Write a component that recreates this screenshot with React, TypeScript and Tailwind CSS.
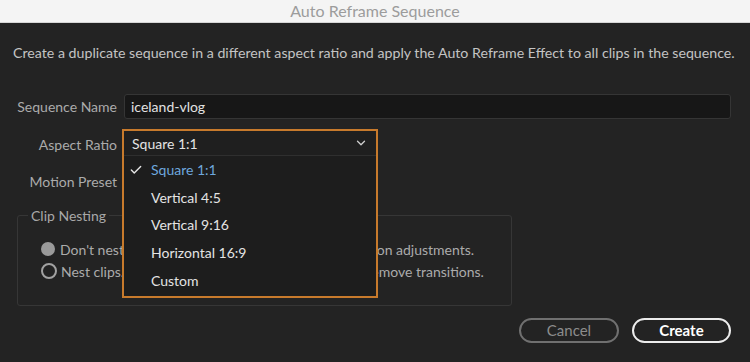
import { Check, ChevronDown } from "lucide-react";

const font = { fontFamily: "Lato, 'Open Sans', sans-serif" };

const options = ["Square 1:1", "Vertical 4:5", "Vertical 9:16", "Horizontal 16:9", "Custom"];

export default function App() {
  return (
    <div className="w-[750px] h-[362px] flex flex-col bg-[#232323] overflow-hidden" style={font}>
      {/* title bar */}
      <div className="h-[23px] shrink-0 bg-[#f4f4f4] border-b border-[#d6d6d6] flex items-center justify-center">
        <span className="text-[16px] text-[#9c9c9c] leading-none">Auto Reframe Sequence</span>
      </div>

      <div className="flex-1 flex flex-col px-[17px] pt-[20px] text-[14px] text-[#ababab]">
        <p className="text-[14.2px] leading-[20px] text-[#c4c4c4] whitespace-nowrap -ml-[4px]">
          Create a duplicate sequence in a different aspect ratio and apply the Auto Reframe Effect to all clips in the sequence.
        </p>

        {/* form rows */}
        <div className="mt-[30px] flex flex-col">
          <div className="flex items-center h-[26px]">
            <span className="w-[100px] text-right whitespace-nowrap">Sequence Name</span>
            <div className="ml-[7px] w-[607px] h-[25px] bg-[#171717] border border-[#353535] rounded-[3px] px-[6px] flex items-center text-[#e2e2e2]">
              iceland-vlog
            </div>
          </div>

          <div className="flex items-center h-[26px] mt-[12px]">
            <span className="w-[100px] text-right whitespace-nowrap">Aspect Ratio</span>
            <div className="relative ml-[5px] w-[256px] h-[26px]">
              <div className="absolute left-0 top-[-2px] w-[256px] border-2 border-[#c77a2c] bg-[#1d1d1d] z-10">
                <div className="h-[25px] flex items-center justify-between pl-[8px] pr-[8px] bg-[#1f1f1f] border-b border-[#2f2f2f] text-[#e4e4e4]">
                  <span>Square 1:1</span>
                  <ChevronDown size={14} strokeWidth={2.2} className="text-[#cfcfcf]" />
                </div>
                <ul className="pb-[2px]">
                  {options.map((o, i) => (
                    <li key={o} className="h-[27.6px] flex items-center">
                      <span className="w-[27px] flex justify-end pr-[8px]">
                        {i === 0 && <Check size={14} strokeWidth={2.4} className="text-[#e6e6e6]" />}
                      </span>
                      <span className={i === 0 ? "text-[#6ea7dd]" : "text-[#e4e4e4]"}>{o}</span>
                    </li>
                  ))}
                </ul>
              </div>
            </div>
          </div>

          <div className="flex items-center h-[26px] mt-[11px]">
            <span className="w-[100px] text-right whitespace-nowrap">Motion Preset</span>
            <div className="ml-[7px] w-[250px] h-[24px] bg-[#1f1f1f]" />
          </div>
        </div>

        {/* clip nesting */}
        <fieldset className="mt-[11px] w-[495px] h-[101px] border border-[#363636] rounded-[3px] px-[23px] pb-[8px]">
          <legend className="px-[3px] ml-[-13px] text-[#a8a8a8]">Clip Nesting</legend>
          <div className="mt-[12px] flex items-center gap-[5px] h-[22px]">
            <span className="w-[14px] h-[14px] rounded-full bg-[#9a9a9a]" />
            <span>Don't nest clips. Preserve transitions and allow motion adjustments.</span>
          </div>
          <div className="flex items-center gap-[4px] h-[22px]">
            <span className="w-[16px] h-[16px] rounded-full border-2 border-[#a2a2a2]" />
            <span>Nest clips. Nesting will flatten the clip effects and remove transitions.</span>
          </div>
        </fieldset>

        {/* buttons */}
        <div className="mt-[12px] flex justify-end gap-[13px] pr-[2px]">
          <button className="w-[100px] h-[25px] rounded-full border-2 border-[#707070] text-[#8c8c8c] text-[15px] leading-none">
            Cancel
          </button>
          <button className="w-[99px] h-[25px] rounded-full border-2 border-[#ececec] text-white font-bold text-[15px] leading-none">
            Create
          </button>
        </div>
      </div>
    </div>
  );
}
